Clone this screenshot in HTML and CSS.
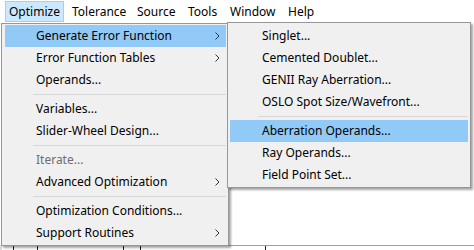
FILE: index.html
```html
<!DOCTYPE html>
<html lang="en">

<head>
    <meta charset="UTF-8">
    <title>Optimize menu</title>
    <link rel="stylesheet" href="styles.css">
</head>

<body>
    <div class="app">
        <div class="menubar">
            <span class="menu-title active">Optimize</span>
            <span class="menu-title">Tolerance</span>
            <span class="menu-title">Source</span>
            <span class="menu-title">Tools</span>
            <span class="menu-title">Window</span>
            <span class="menu-title">Help</span>
        </div>

        <div class="workspace">
            <div class="table-row">
                <span class="cell c1"></span>
                <span class="cell c2"></span>
                <span class="cell c3"></span>
                <span class="cell c4"></span>
                <span class="cell c5"></span>
            </div>
        </div>

        <!-- Optimize dropdown -->
        <div class="dropdown main-menu">
            <div class="item selected">Generate Error Function<svg class="arrow" viewBox="0 0 5 8"><path d="M0.5 0.5 L4 4 L0.5 7.5" /></svg></div>
            <div class="item">Error Function Tables<svg class="arrow" viewBox="0 0 5 8"><path d="M0.5 0.5 L4 4 L0.5 7.5" /></svg></div>
            <div class="item">Operands...</div>
            <div class="separator"></div>
            <div class="item">Variables...</div>
            <div class="item">Slider-Wheel Design...</div>
            <div class="separator"></div>
            <div class="item disabled">Iterate...</div>
            <div class="item">Advanced Optimization<svg class="arrow" viewBox="0 0 5 8"><path d="M0.5 0.5 L4 4 L0.5 7.5" /></svg></div>
            <div class="separator"></div>
            <div class="item">Optimization Conditions...</div>
            <div class="item">Support Routines<svg class="arrow" viewBox="0 0 5 8"><path d="M0.5 0.5 L4 4 L0.5 7.5" /></svg></div>
        </div>

        <!-- Generate Error Function submenu -->
        <div class="dropdown sub-menu">
            <div class="item">Singlet...</div>
            <div class="item">Cemented Doublet...</div>
            <div class="item">GENII Ray Aberration...</div>
            <div class="item">OSLO Spot Size/Wavefront...</div>
            <div class="separator"></div>
            <div class="item selected">Aberration Operands...</div>
            <div class="item">Ray Operands...</div>
            <div class="item">Field Point Set...</div>
        </div>
    </div>
</body>

</html>
```

FILE: styles.css
```css
body {
    margin: 0;
    background: #ffffff;
    font-family: 'Noto Sans', 'Noto Sans CJK KR', sans-serif;
    font-size: 12px;
    color: #000000;
}

.app {
    position: relative;
    width: 474px;
    height: 250px;
    overflow: hidden;
}

/* Menu bar */
.menubar {
    display: flex;
    height: 23px;
    padding-left: 5px;
    background: #ffffff;
}

.menu-title {
    display: flex;
    align-items: center;
    height: 21px;
    margin-top: 1px;
    padding: 0 6px 0 3px;
    border: 1px solid transparent;
    box-sizing: border-box;
}

.menu-title.active {
    background: #cce8ff;
    border-color: #99d1ff;
    width: 59px;
    margin-right: 4px;
}

.menu-title:nth-child(2) { width: 65px; }
.menu-title:nth-child(3) { width: 51px; }
.menu-title:nth-child(4) { width: 42px; }
.menu-title:nth-child(5) { width: 58px; }

/* Window content behind the menus */
.workspace {
    height: 227px;
    border-left: 2px solid #d9d9d9;
}

.table-row {
    display: flex;
    margin-top: 222px;
    height: 18px;
    border-top: 1px solid #a0a0a0;
}

.cell {
    border-right: 1px solid #202020;
}

.c1 { width: 11px; }
.c2 { width: 23px; }
.c3 { width: 85px; }
.c4 { width: 16px; }
.c5 { width: 124px; }

/* Dropdowns */
.dropdown {
    position: absolute;
    background: #f0f0f0;
    border: 1px solid #979797;
    box-shadow: 2px 2px 2px rgba(0, 0, 0, 0.35);
    box-sizing: border-box;
}

.main-menu {
    left: 1px;
    top: 23px;
    width: 228px;
    padding: 1px 2px 1px 3px;
}

.sub-menu {
    left: 227px;
    top: 22px;
    width: 244px;
    padding: 2px 2px 1px 2px;
}

.item {
    position: relative;
    height: 22px;
    line-height: 22px;
    padding-left: 31px;
    white-space: nowrap;
}

.sub-menu .item {
    padding-left: 32px;
}

.item.selected {
    background: #91c9f7;
}

.item.disabled {
    color: #6d6d6d;
}

.arrow {
    position: absolute;
    right: 6px;
    top: 7px;
    width: 5px;
    height: 8px;
    fill: none;
    stroke: #333333;
    stroke-width: 1;
}

.separator {
    height: 7px;
    margin-left: 28px;
    position: relative;
}

.separator::after {
    content: "";
    position: absolute;
    left: 0;
    right: 0;
    top: 3px;
    border-top: 1px solid #d7d7d7;
}
```
